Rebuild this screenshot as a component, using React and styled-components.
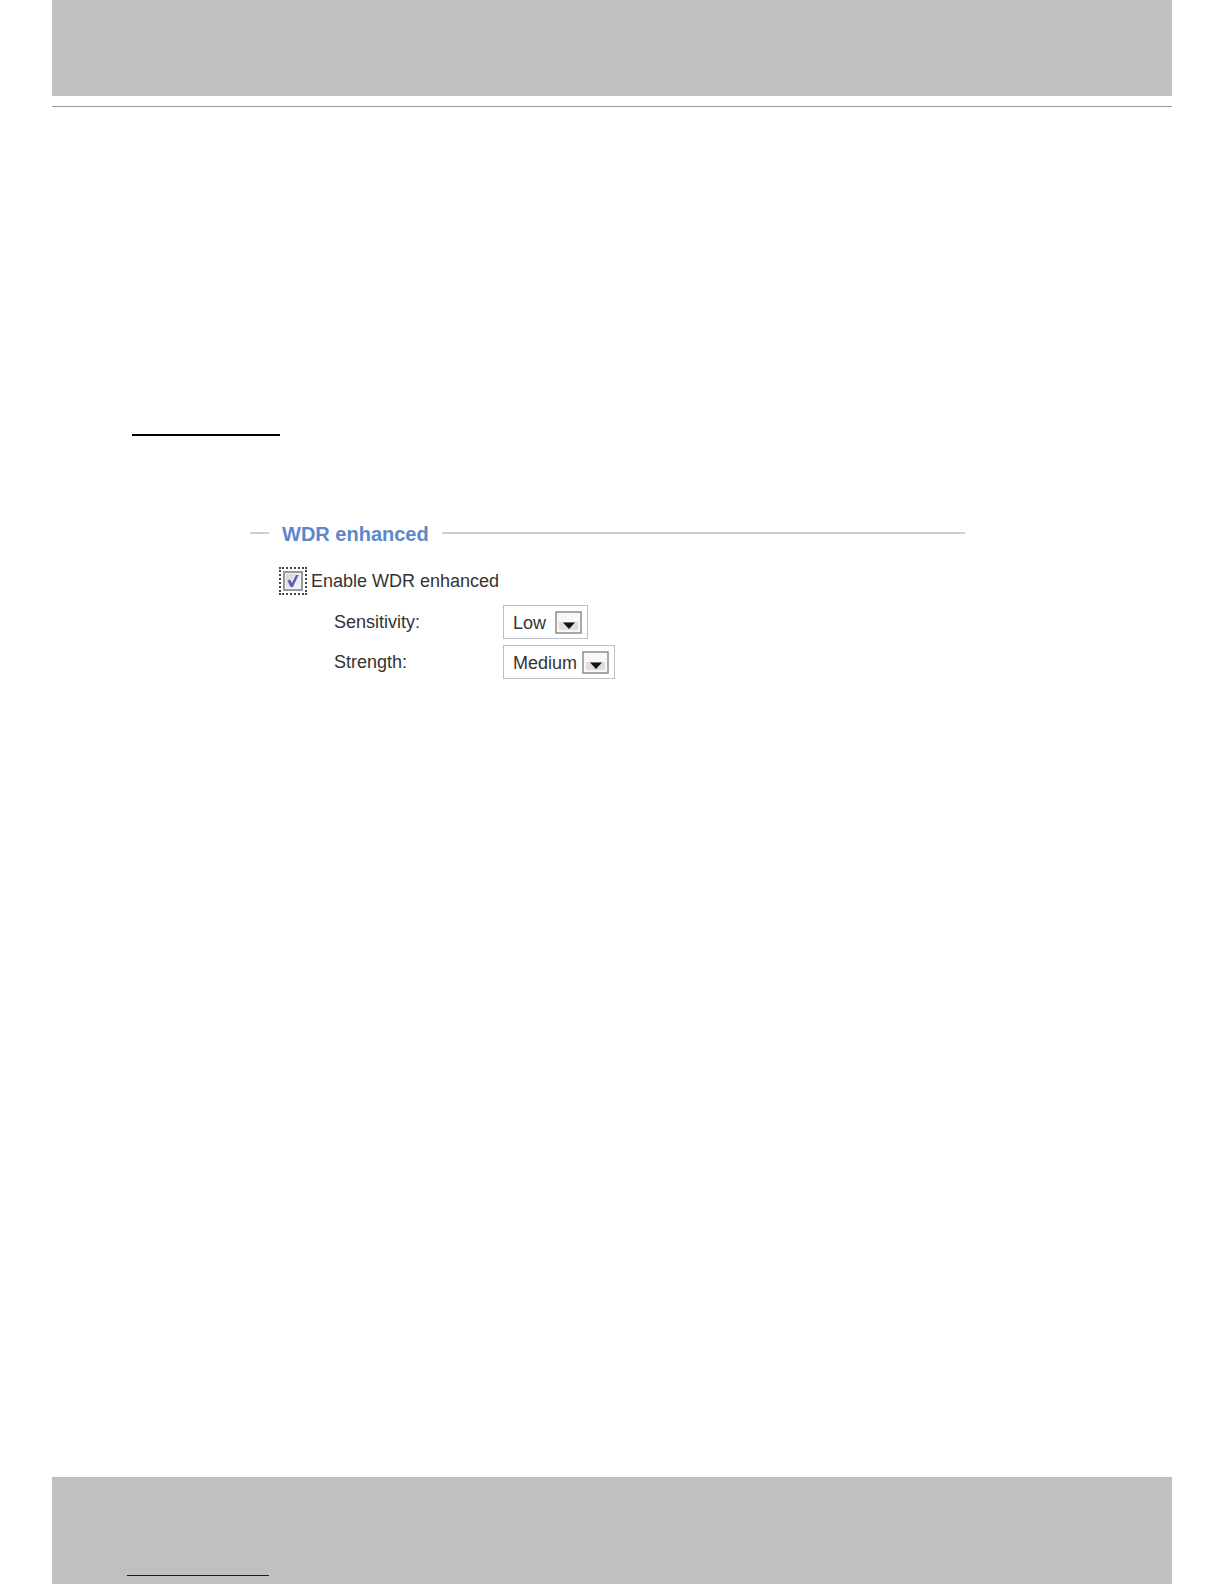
import React, { useState } from "react";
import styled, { createGlobalStyle } from "styled-components";

const levels = ["Low", "Medium", "High"];

function Select({ id, value, onChange, width }) {
    return (
        <SelectWrapper $width={width}>
            <SelectBox id={id} value={value} onChange={(e) => onChange(e.target.value)}>
                {levels.map((level) => (
                    <option key={level}>{level}</option>
                ))}
            </SelectBox>
            <Arrow viewBox="0 0 27 23" aria-hidden="true">
                <rect x="1" y="1" width="25" height="21" fill="#f8f8f8" stroke="#8c8c8c" strokeWidth="1.5" />
                <rect x="4" y="11" width="19" height="8" fill="#dedede" />
                <path d="M8 11.500h12l-6 6.500z" fill="#111" />
            </Arrow>
        </SelectWrapper>
    );
}

function App() {
    const [enabled, setEnabled] = useState(true);
    const [sensitivity, setSensitivity] = useState("Low");
    const [strength, setStrength] = useState("Medium");

    return (
        <Page>
            <GlobalStyle />
            <Header />
            <Main>
                <Rule $color="#000" $width="148px" $thickness="2px" />
                <Panel>
                    <TitleRow>
                        <Title>WDR enhanced</Title>
                    </TitleRow>
                    <CheckRow>
                        <CheckFrame>
                            <Checkbox
                                type="checkbox"
                                id="wdr"
                                checked={enabled}
                                onChange={(e) => setEnabled(e.target.checked)}
                            />
                            {enabled && (
                                <Tick viewBox="0 0 20 20" aria-hidden="true">
                                    <path d="M4.500 9.500l2.500-1 2 3.500 4-8h2.500l-5.500 12h-2.500z" fill="#5a5fb4" />
                                </Tick>
                            )}
                        </CheckFrame>
                        <label htmlFor="wdr">Enable WDR enhanced</label>
                    </CheckRow>
                    <Fields>
                        <label htmlFor="sensitivity">Sensitivity:</label>
                        <Select id="sensitivity" value={sensitivity} onChange={setSensitivity} width="85px" />
                        <label htmlFor="strength">Strength:</label>
                        <Select id="strength" value={strength} onChange={setStrength} width="112px" />
                    </Fields>
                </Panel>
            </Main>
            <Footer>
                <Rule $color="#0000e0" $width="142px" $thickness="1px" />
            </Footer>
        </Page>
    );
}

const GlobalStyle = createGlobalStyle`
    * {
        box-sizing: border-box;
    }

    body {
        margin: 0;
        background: #fff;
        color: #333;
        font: 18px "Liberation Sans", Arial, sans-serif;
    }
`;

const Page = styled.div`
    display: flex;
    flex-direction: column;
    min-height: 100vh;
    padding: 0 52px;
`;

const Header = styled.header`
    height: 96px;
    background: #c0c0c0;
`;

const Main = styled.main`
    flex: 1;
    margin-top: 10px;
    padding: 327px 80px 0;
    border-top: 1px solid #999;
`;

const Footer = styled.footer`
    padding: 98px 75px 8px;
    background: #c0c0c0;
`;

const Rule = styled.hr`
    width: ${({ $width }) => $width};
    height: ${({ $thickness }) => $thickness};
    margin: 0;
    border: none;
    background: ${({ $color }) => $color};
`;

const Panel = styled.section`
    margin: 84px 127px 0 118px;
`;

const TitleRow = styled.div`
    display: flex;
    align-items: center;
    gap: 13px;

    &::before,
    &::after {
        content: "";
        width: 19px;
        height: 2px;
        background: #cfcfcf;
    }

    &::after {
        flex: 1;
    }
`;

const Title = styled.h2`
    margin: 0;
    padding-top: 2px;
    color: #5b88cb;
    font-size: 20px;
    line-height: 24px;
`;

const CheckRow = styled.div`
    display: flex;
    align-items: center;
    gap: 4px;
    margin-top: 21px;
    padding-left: 29px;
`;

const CheckFrame = styled.span`
    display: grid;
    place-items: center;
    width: 28px;
    height: 28px;
    border: 2px dotted #444;

    > * {
        grid-area: 1 / 1;
    }
`;

const Checkbox = styled.input`
    appearance: none;
    width: 20px;
    height: 20px;
    margin: 0;
    border: 2px solid #97999d;
    background: linear-gradient(135deg, #d0d3d9, #fafafa);
    box-shadow: inset 0 0 0 1px #f4f4f4;
`;

const Tick = styled.svg`
    width: 20px;
    height: 20px;
    pointer-events: none;
`;

const Fields = styled.div`
    display: grid;
    grid-template-columns: 169px auto;
    justify-content: start;
    align-items: center;
    row-gap: 6px;
    margin-top: 10px;
    padding-left: 84px;
`;

const SelectWrapper = styled.span`
    display: grid;
    align-items: center;
    width: ${({ $width }) => $width};

    > * {
        grid-area: 1 / 1;
    }
`;

const SelectBox = styled.select`
    appearance: none;
    width: 100%;
    height: 34px;
    padding: 2px 0 0 9px;
    border: 1px solid #b9c0cb;
    border-radius: 0;
    background: #fff;
    color: inherit;
    font: inherit;
`;

const Arrow = styled.svg`
    justify-self: end;
    width: 27px;
    height: 23px;
    margin-right: 6px;
    pointer-events: none;
`;

export default App;
